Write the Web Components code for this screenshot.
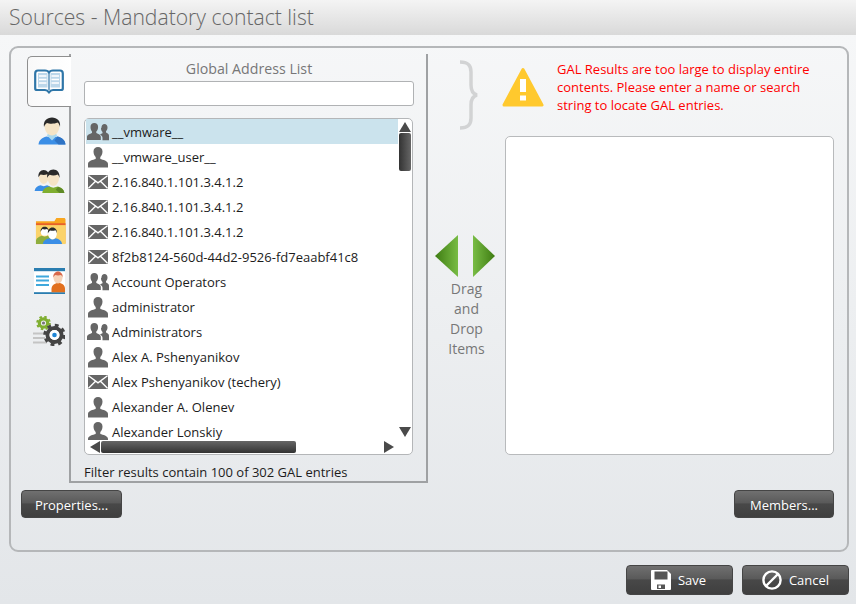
<!DOCTYPE html>
<html>
<head>
<meta charset="utf-8">
<title>Sources</title>
<style>
  html, body { margin: 0; padding: 0; height: 100%; overflow: hidden; }
  body { font-family: "Open Sans", "Noto Sans", "Liberation Sans", sans-serif; font-size: 13px; }
</style>
</head>
<body>
<sources-window></sources-window>
<script>
const ICONS = {
  group: `<svg width="22" height="20" viewBox="0 0 22 20"><g fill="#666"><path d="M14.5 5.5c0-2 1.2-3.5 3-3.500s3 1.500 3 3.500c0 1.700-.7 3-1.500 3.800v1.200c1.300.7 3 1.300 3 3.300v4.500h-6.500v-2.500c0-1.500-1-2.500-2.500-3.300.9-.5 1.800-.8 2.500-1.200v-1.200c-.8-.8-1.500-2.100-1.500-3.800z"/><path d="M3.500 5c0-2.500 1.500-4 3.800-4s3.800 1.500 3.800 4c0 2-.8 3.500-1.800 4.500v1.500c1.800.9 4.500 1.500 4.500 4v3H0v-3c0-2.500 3.200-3.100 5-4V9.500C4.300 8.500 3.500 7 3.500 5z"/></g></svg>`,
  user: `<svg width="22" height="22" viewBox="0 0 22 22"><path fill="#666" d="M6.500 5.500C6.500 2.500 8.300 1 11 1s4.500 1.500 4.500 4.500c0 2.500-1 4.500-2.200 5.500v2c2.500 1 7.700 1.500 7.700 5v3.500H1V18c0-3.500 5.200-4 7.700-5v-2C7.500 10 6.500 8 6.500 5.500z"/></svg>`,
  mail: `<svg width="20" height="14" viewBox="0 0 20 14"><rect width="20" height="14" rx="1" fill="#666"/><path d="M0.500 0.800 10 7.800 19.500 0.800M0.500 13.200 7.500 6.200M19.500 13.200 12.500 6.200" fill="none" stroke="#fff" stroke-width="1.400"/></svg>`,
  book: `<svg width="30" height="25" viewBox="0 0 30 25" style="margin-left:-1px"><path d="M1.200 4.500Q1.200 1.500 4 1.500H11Q14 1.500 15 3.500 16 1.500 19 1.500H26Q28.800 1.500 28.800 4.500V19.500Q28.800 21 27 21H19Q16.500 21 15 23.500 13.500 21 11 21H3Q1.200 21 1.200 19.500z" fill="#fff" stroke="#2f76a8" stroke-width="2.200" stroke-linejoin="round"/><rect x="4" y="4" width="9.500" height="14.500" fill="#bcd7ea"/><rect x="16.500" y="4" width="9.500" height="14.500" fill="#bcd7ea"/><path d="M5 7h7.500M5 10.500h7.500M5 14h7.500M17.500 7H25M17.500 10.500H25M17.500 14H25" stroke="#fff" stroke-width="1.500"/><path d="M15 3.500V21" stroke="#2f76a8" stroke-width="1.200"/></svg>`,
  person: `<svg width="28" height="28" viewBox="0 0 28 28" style="margin-left:5px"><path d="M.5 27.500c.5-4.500 3-6.500 8-8l5.500 1 5.500-1c5 1.500 7.500 3.500 8 8z" fill="#3b8ee6"/><path d="M19.500 19.500c5 1.500 7.500 3.500 8 8h-7l-4-4z" fill="#2f73c4"/><path d="M9 18.500l5 5 5-5-1-2h-8z" fill="#a9d8ee"/><path d="M6.500 8.500c0-5 3-7.500 7.500-7.500s7.500 2.500 7.500 7.500c0 6-3.500 10-7.500 10s-7.500-4-7.500-10z" fill="#f5e4c6"/><path d="M6 10C5 4 9 .5 14 .5S23 4 22 10c-.5-2-1-3.500-2.500-4.500-3 1.500-8 1.500-10.500.5C7.500 7 6.500 8 6 10z" fill="#2a2a2a"/></svg>`,
  people: `<svg width="31" height="24" viewBox="0 0 32 25"><path d="M.5 23c.5-3.500 2.500-5 6-6l3.500 1 3.500-1c3 1 4 2 5 4l-2 2z" fill="#3b8ee6"/><path d="M5 8c0-3.500 2-5.500 5-5.500s5 2 5 5.500c0 4.500-2.500 7.500-5 7.500S5 12.500 5 8z" fill="#f5e4c6"/><path d="M4.500 8.500C4 4 6.500 1 10 1s6 3 5.500 7.500c-.4-1.500-.8-2.500-1.800-3-2 1-5 1-7 .3-.9.8-1.500 1.500-2.200 2.700z" fill="#2a2a2a"/><path d="M8.500 25c.5-4 3-5.500 7-6.800l4.500 1.300 4.500-1.300c4 1.300 6.500 2.800 7 6.800z" fill="#7fae30"/><path d="M25 18.500c3.500 1.300 6 2.800 6.500 6.500h-5l-4-3.500z" fill="#5f8a26"/><path d="M14 8.500c0-4.500 2.500-7 6-7s6 2.500 6 7c0 5-2.800 9-6 9s-6-4-6-9z" fill="#f5e4c6"/><path d="M13.500 9.500C13 4 16 .5 20 .5s7 3.500 6.500 9c-.4-1.800-1-3-2-3.800-2.500 1.200-6 1.200-8.200.3-1.300 1-2.300 1.800-2.800 3.500z" fill="#2a2a2a"/></svg>`,
  folder: `<svg width="31" height="28" viewBox="0 0 32 28" style="margin-left:2px"><path d="M1 4h19l2-3.500h8c.8 0 1.500.7 1.500 1.500v24c0 .8-.7 1.500-1.500 1.500H1z" fill="#f9a61f"/><rect x="1" y="6" width="30.500" height="2" fill="#e8602a"/><rect x="1" y="8" width="30.500" height="19.500" fill="#fbd36a"/><path d="M1 27.500v-4c1-2.500 3-3.500 6-4.500l3 1 3-1c2 .8 3 1.500 4 3l-2 5.500z" fill="#8fae3e"/><circle cx="10" cy="15" r="4" fill="#fff"/><path d="M5.800 15C5.500 11.500 7.500 9.500 10 9.500s4.500 2 4.200 5.500c-.5-2-1-2.500-1.700-3-1.500.5-3.500.5-4.700 0-.9.8-1.500 1.500-2 3z" fill="#2a2a2a"/><path d="M8 27.500c.5-3.500 3-5 6.500-6l3.500 1.200 3.500-1.200c3.500 1 6 2.500 6.500 6z" fill="#3b8ee6"/><path d="M13.500 16.500c0-3.500 2-5.500 4.500-5.500s4.500 2 4.500 5.500-2 6-4.500 6-4.500-2.500-4.500-6z" fill="#fff"/><path d="M13.300 16.500C13 13 15 10.500 18 10.500s5 2.500 4.700 6c-.4-1.500-.9-2.500-1.700-3.200-1.800.7-4 .7-5.300.2-.9.7-1.700 1.500-2.400 3z" fill="#2a2a2a"/></svg>`,
  card: `<svg width="31" height="26" viewBox="0 0 31 26"><rect width="31" height="26" rx="1" fill="#fff"/><rect width="31" height="3.200" fill="#2a7db0"/><rect y="24.200" width="31" height="1.800" fill="#2a7db0"/><path d="M2 8.500h13M2 12.500h13M2 17h13" stroke="#3fa8dc" stroke-width="2"/><path d="M17.500 21.500c0-4 2-5.500 5.500-6.500h3c3.500 1 5 2.500 5 6.500v2.700H17.500z" fill="#e2701f"/><path d="M19.500 9.500c0-3 2-5 4.500-5s4.500 2 4.500 5-2 6-4.500 6-4.500-3-4.500-6z" fill="#f6d3b8"/><path d="M19.300 9.500c-.3-3.500 2-6 4.700-6s5 2.500 4.700 6c-.4-1.500-1-2-1.700-2.500-2 .6-4 .6-5.700 0-.9.6-1.500 1.300-2 2.500z" fill="#d8684a"/></svg>`,
  gears: `<svg width="32" height="30" viewBox="0 0 32 30"><path d="M0 17.500h13M0 22h12M0 26.500h14" stroke="#c4c4c4" stroke-width="2"/><g fill="none"><circle cx="10.500" cy="7" r="4.200" stroke="#7fae30" stroke-width="3.200"/><circle cx="10.500" cy="7" r="6.300" stroke="#7fae30" stroke-width="2" stroke-dasharray="2.500 2.450"/><circle cx="21.500" cy="19" r="7" stroke="#444" stroke-width="4"/><circle cx="21.500" cy="19" r="9.700" stroke="#444" stroke-width="3" stroke-dasharray="3.800 3.820"/></g><circle cx="10.500" cy="7" r="1.600" fill="#777"/><circle cx="21.500" cy="19" r="5" fill="#fff"/><circle cx="21.500" cy="19" r="2.300" fill="#1f86d6"/></svg>`,
  save: `<svg width="20" height="20" viewBox="0 0 20 20" style="margin-left:-2px"><path d="M1 0h15l4 4v15a1 1 0 0 1-1 1H1a1 1 0 0 1-1-1V1a1 1 0 0 1 1-1z" fill="#fff"/><rect x="3.500" y="1.500" width="13" height="8" fill="#555"/><rect x="5" y="13" width="10" height="7" fill="#fff"/><rect x="6" y="14.500" width="8" height="4.500" fill="#555"/><rect x="7.500" y="15.500" width="2.500" height="2.500" fill="#fff"/></svg>`,
  cancel: `<svg width="20" height="20" viewBox="0 0 20 20"><circle cx="10" cy="10" r="8.600" fill="none" stroke="#fff" stroke-width="2.400"/><path d="M4 16 16 4" stroke="#fff" stroke-width="2.400"/></svg>`
};

// small helper so each class only has to list its css and markup
class Base extends HTMLElement {
  constructor() {
    super();
    this.attachShadow({ mode: "open" });
  }
  connectedCallback() {
    this.shadowRoot.innerHTML = `<style>${this.css()}</style>${this.html()}`;
  }
  css() { return ":host { display: block; }"; }
  html() { return "<slot></slot>"; }
}

class DarkButton extends Base {
  css() {
    const icon = this.hasAttribute("icon");
    return `
      :host { display: block; }
      button {
        display: flex; align-items: center; justify-content: center; gap: ${icon ? 7 : 0}px;
        width: ${this.getAttribute("width") || 101}px; height: ${this.getAttribute("height") || 28}px;
        padding: ${icon ? 0 : "2px 0 0"}; border: 1px solid #454545; border-radius: 4px;
        background: linear-gradient(#707070 0, #5a5a5a 45%, #484848 50%, #3f3f3f 100%);
        color: #fff; font: 13px "Open Sans", "Noto Sans", sans-serif;
      }
      svg { display: block; }
    `;
  }
  html() {
    const icon = ICONS[this.getAttribute("icon")] || "";
    return `<button>${icon}<slot></slot></button>`;
  }
}

class TabStrip extends Base {
  css() {
    return `
      :host { display: flex; flex-direction: column; width: 44px; margin: 2px -2px 0 16px; position: relative; z-index: 1; }
      .tab { height: 50px; flex: none; display: flex; align-items: center; justify-content: center; box-sizing: border-box; }
      .tab.on {
        background: linear-gradient(90deg, #f9f9f9, #fff); border: 1px solid #8f8f8f; border-right: 0;
        border-radius: 5px 0 0 5px; height: 51px; margin-bottom: -1px;
      }
      svg { display: block; flex: none; }
    `;
  }
  html() {
    return ["book", "person", "people", "folder", "card", "gears"]
      .map((n, i) => `<div class="tab ${i ? "" : "on"}">${ICONS[n]}</div>`)
      .join("");
  }
}

class GalRow extends Base {
  css() {
    return `
      :host { display: flex; align-items: center; height: 25px; flex: none; color: #1c1c1c; white-space: nowrap; }
      :host([selected]) { background: #cbe3ed; }
      .ic { width: 24px; margin-right: 2px; display: flex; justify-content: center; flex: none; }
      svg { display: block; }
    `;
  }
  html() {
    return `<span class="ic">${ICONS[this.getAttribute("type")]}</span><slot></slot>`;
  }
}

class GalList extends Base {
  css() {
    return `
      :host {
        display: grid; grid-template-columns: 1fr 14px; grid-template-rows: 1fr 14px;
        width: 329px; height: 337px; box-sizing: border-box; background: #fff;
        border: 1px solid #b4b6b8; border-radius: 5px; padding: 0 0 0 1px;
      }
      .rows { overflow: hidden; display: flex; flex-direction: column; min-width: 0; min-height: 0; }
      .v { display: flex; flex-direction: column; align-items: center; padding-top: 3px; overflow: hidden; }
      i { display: block; flex: none; }
      .up { width: 0; height: 0; border: 6px solid transparent; border-top: 0; border-bottom: 10px solid #4a4a4a; }
      .vthumb { width: 12px; height: 38px; margin-top: 1px; border-radius: 2px; background: linear-gradient(90deg, #333, #666); }
      .dn { width: 0; height: 0; border: 6px solid transparent; border-bottom: 0; border-top: 10px solid #4a4a4a; margin-top: auto; margin-bottom: 3px; }
      .h { grid-column: 1 / 3; display: flex; align-items: center; padding: 0 18px 1px 4px; }
      .lt { width: 0; height: 0; border: 6px solid transparent; border-left: 0; border-right: 10px solid #4a4a4a; }
      .hthumb { width: 195px; height: 12px; margin-left: 1px; border-radius: 2px; background: linear-gradient(#666, #333); }
      .rt { width: 0; height: 0; border: 6px solid transparent; border-right: 0; border-left: 10px solid #4a4a4a; margin-left: auto; }
    `;
  }
  html() {
    return `
      <div class="rows"><slot></slot></div>
      <div class="v"><i class="up"></i><i class="vthumb"></i><i class="dn"></i></div>
      <div class="h"><i class="lt"></i><i class="hthumb"></i><i class="rt"></i></div>
    `;
  }
}

class AddressPanel extends Base {
  css() {
    return `
      :host {
        display: flex; flex-direction: column; align-items: flex-start; box-sizing: border-box; flex: none;
        width: 359px; height: 429px; padding: 0 13px; color: #1c1c1c;
        border-left: 2px solid #9fa1a3; border-right: 2px solid #9fa1a3; border-bottom: 2px solid #9fa1a3;
      }
      .head { width: 330px; height: 27px; line-height: 29px; text-align: center; color: #777; font-size: 14.2px; }
      .search { width: 330px; height: 25px; box-sizing: border-box; background: #fff; border: 1px solid #b0b2b4; border-radius: 3px; margin-bottom: 12px; }
      .note { margin-top: 8px; line-height: 18px; white-space: nowrap; }
    `;
  }
  html() {
    return `
      <div class="head">Global Address List</div>
      <div class="search"></div>
      <slot></slot>
      <div class="note">Filter results contain 100 of 302 GAL entries</div>
    `;
  }
}

class DropArea extends Base {
  css() {
    return `
      :host { display: flex; flex-direction: column; width: 406px; height: 401px; flex: none; }
      .top { display: flex; height: 82px; flex: none; }
      svg { display: block; flex: none; }
      .brace { margin: 6px 0 0 31px; }
      .warn { margin: 13px 0 0 23px; }
      .msg { margin: 6px 0 0 13px; color: #f00; font-size: 13px; line-height: 18px; white-space: nowrap; }
      .low { display: flex; flex: 1; min-height: 0; }
      .mid { width: 77px; flex: none; display: flex; flex-direction: column; align-items: center; padding-top: 99px; color: #777; text-align: center; line-height: 20px; font-size: 14px; }
      .arrows { margin: 0 0 2px -3px; }
      .box { flex: 1; background: #fff; border: 1px solid #b8babc; border-radius: 5px; }
    `;
  }
  html() {
    return `
      <div class="top">
        <svg class="brace" width="20" height="70" viewBox="0 0 20 70"><path d="M1 2c8 0 11 3 11 10v13c0 6 2 9 6 10-4 1-6 4-6 10v13c0 7-3 10-11 10" fill="none" stroke="#d2d3d4" stroke-width="3.5"/></svg>
        <svg class="warn" width="42" height="40" viewBox="0 0 42 40"><path d="M21 2.500 40 38H2z" fill="#ffc92e" stroke="#ffc92e" stroke-width="3" stroke-linejoin="round"/><rect x="18" y="12" width="6" height="13" fill="#fff"/><rect x="18" y="28.500" width="6" height="5" fill="#fff"/></svg>
        <div class="msg">GAL Results are too large to display entire<br>contents. Please enter a name or search<br>string to locate GAL entries.</div>
      </div>
      <div class="low">
        <div class="mid">
          <svg class="arrows" width="60" height="42" viewBox="0 0 60 42">
            <defs>
              <linearGradient id="gl" x1="0" x2="1" y1="0" y2="0"><stop offset="0" stop-color="#3e7c12"/><stop offset="1" stop-color="#78bc44"/></linearGradient>
              <linearGradient id="gr" x1="0" x2="1" y1="0" y2="0"><stop offset="0" stop-color="#78bc44"/><stop offset="1" stop-color="#3e7c12"/></linearGradient>
            </defs>
            <path d="M0 21 23 0V42z" fill="url(#gl)"/><path d="M60 21 38 0V42z" fill="url(#gr)"/>
          </svg>
          <div>Drag<br>and<br>Drop<br>Items</div>
        </div>
        <div class="box"></div>
      </div>
    `;
  }
}

class SourcesWindow extends Base {
  css() {
    return `
      :host {
        display: flex; flex-direction: column; width: 856px; height: 604px;
        background: linear-gradient(#f6f7f8 35px, #e3e6e9 100%);
      }
      .title {
        height: 35px; flex: none; box-sizing: border-box; padding-left: 9px; line-height: 33px;
        background: linear-gradient(#f4f4f4, #d9d9d9); color: #666; font-size: 21.15px; font-weight: 300; white-space: nowrap;
      }
      .panel {
        margin: 11px 0 0 9px; width: 840px; height: 506px; box-sizing: border-box; flex: none;
        border: 2px solid #b5b7b9; border-radius: 9px; padding-top: 6px;
        display: flex; flex-direction: column;
      }
      .row { display: flex; height: 429px; flex: none; }
      .btns { display: flex; justify-content: space-between; padding: 7px 13px 0 10px; }
      .foot { display: flex; justify-content: flex-end; gap: 9px; margin: 13px 7px 0 0; }
    `;
  }
  html() {
    const rows = [
      ["group", "__vmware__"], ["user", "__vmware_user__"], ["mail", "2.16.840.1.101.3.4.1.2"],
      ["mail", "2.16.840.1.101.3.4.1.2"], ["mail", "2.16.840.1.101.3.4.1.2"],
      ["mail", "8f2b8124-560d-44d2-9526-fd7eaabf41c8"], ["group", "Account Operators"], ["user", "administrator"],
      ["group", "Administrators"], ["user", "Alex A. Pshenyanikov"], ["mail", "Alex Pshenyanikov (techery)"],
      ["user", "Alexander A. Olenev"], ["user", "Alexander Lonskiy"]
    ].map((r, i) => `<gal-row type="${r[0]}"${i ? "" : " selected"}>${r[1]}</gal-row>`).join("");
    return `
      <div class="title">Sources - Mandatory contact list</div>
      <div class="panel">
        <div class="row">
          <tab-strip></tab-strip>
          <address-panel><gal-list>${rows}</gal-list></address-panel>
          <drop-area></drop-area>
        </div>
        <div class="btns">
          <dark-button>Properties...</dark-button>
          <dark-button width="100">Members...</dark-button>
        </div>
      </div>
      <div class="foot">
        <dark-button icon="save" width="107" height="30">Save</dark-button>
        <dark-button icon="cancel" width="107" height="30">Cancel</dark-button>
      </div>
    `;
  }
}

customElements.define("dark-button", DarkButton);
customElements.define("tab-strip", TabStrip);
customElements.define("gal-row", GalRow);
customElements.define("gal-list", GalList);
customElements.define("address-panel", AddressPanel);
customElements.define("drop-area", DropArea);
customElements.define("sources-window", SourcesWindow);
</script>
</body>
</html>
